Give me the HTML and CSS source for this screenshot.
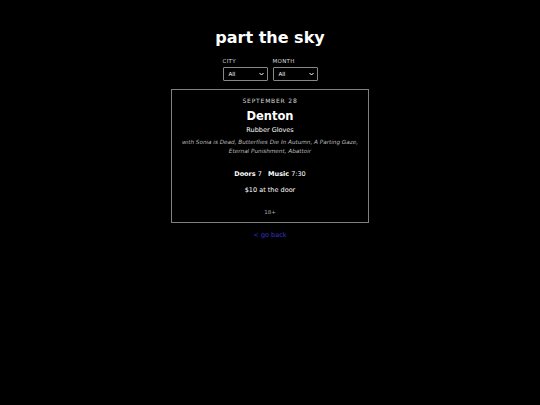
FILE: index.html
```html
<!DOCTYPE html>
<html>
<head>
<meta charset="utf-8">
<link rel="stylesheet" href="styles.css">
</head>
<body>
<div class="page">
  <h1 class="title">part the sky</h1>
  <div class="filters">
    <div class="filter">
      <label class="flabel">CITY</label>
      <div class="select"><span>All</span><svg width="5" height="4" viewBox="0 0 5 4"><path d="M0.5 1 L2.5 3 L4.5 1" fill="none" stroke="#fff" stroke-width="1"/></svg></div>
    </div>
    <div class="filter">
      <label class="flabel">MONTH</label>
      <div class="select"><span>All</span><svg width="5" height="4" viewBox="0 0 5 4"><path d="M0.5 1 L2.5 3 L4.5 1" fill="none" stroke="#fff" stroke-width="1"/></svg></div>
    </div>
  </div>
  <div class="card">
    <div class="date">SEPTEMBER 28</div>
    <div class="city">Denton</div>
    <div class="venue">Rubber Gloves</div>
    <div class="with">with Sonia is Dead, Butterflies Die In Autumn, A Parting Gaze, Eternal Punishment, Abattoir</div>
    <div class="times"><b>Doors</b> 7 &nbsp; <b>Music</b> 7:30</div>
    <div class="price">$10 at the door</div>
    <div class="age">18+</div>
  </div>
  <a class="back" href="#">&lt; go back</a>
</div>
</body>
</html>
```
FILE: styles.css
```css
html, body {
  margin: 0;
  padding: 0;
  background: #000;
  color: #fff;
  font-family: "DejaVu Sans", Verdana, sans-serif;
}
.page {
  display: flex;
  flex-direction: column;
  align-items: center;
  padding-top: 27px;
}
.title {
  margin: 0;
  font-size: 16px;
  font-weight: bold;
  line-height: 22px;
}
.filters {
  display: flex;
  gap: 5px;
  margin-top: 9px;
}
.filter {
  display: flex;
  flex-direction: column;
}
.flabel {
  font-size: 5.5px;
  letter-spacing: 0.3px;
  color: #ddd;
  line-height: 7px;
  margin-bottom: 2px;
}
.select {
  width: 45px;
  height: 14px;
  box-sizing: border-box;
  border: 1px solid #888;
  border-radius: 1px;
  background: #000;
  display: flex;
  align-items: center;
  justify-content: space-between;
  padding: 0 3px 0 5px;
  font-size: 5.5px;
}
.card {
  margin-top: 8px;
  width: 198px;
  box-sizing: border-box;
  border: 1px solid #808080;
  display: flex;
  flex-direction: column;
  align-items: center;
  text-align: center;
  padding: 7px 6px 6px;
}
.date {
  font-size: 6px;
  letter-spacing: 0.8px;
  color: #ddd;
  line-height: 8px;
}
.city {
  font-size: 11.5px;
  font-weight: bold;
  line-height: 15px;
  margin-top: 4px;
}
.venue {
  font-size: 6.5px;
  line-height: 9px;
  margin-top: 2px;
}
.with {
  font-size: 5.7px;
  font-style: italic;
  color: #bbb;
  line-height: 9px;
  margin-top: 3px;
}
.times {
  font-size: 6.5px;
  line-height: 9px;
  margin-top: 14px;
}
.price {
  font-size: 6.5px;
  line-height: 9px;
  margin-top: 7px;
}
.age {
  font-size: 5.5px;
  color: #aaa;
  line-height: 8px;
  margin-top: 13px;
}
.back {
  margin-top: 8px;
  font-size: 6.5px;
  color: #3333cc;
  text-decoration: none;
}
```
